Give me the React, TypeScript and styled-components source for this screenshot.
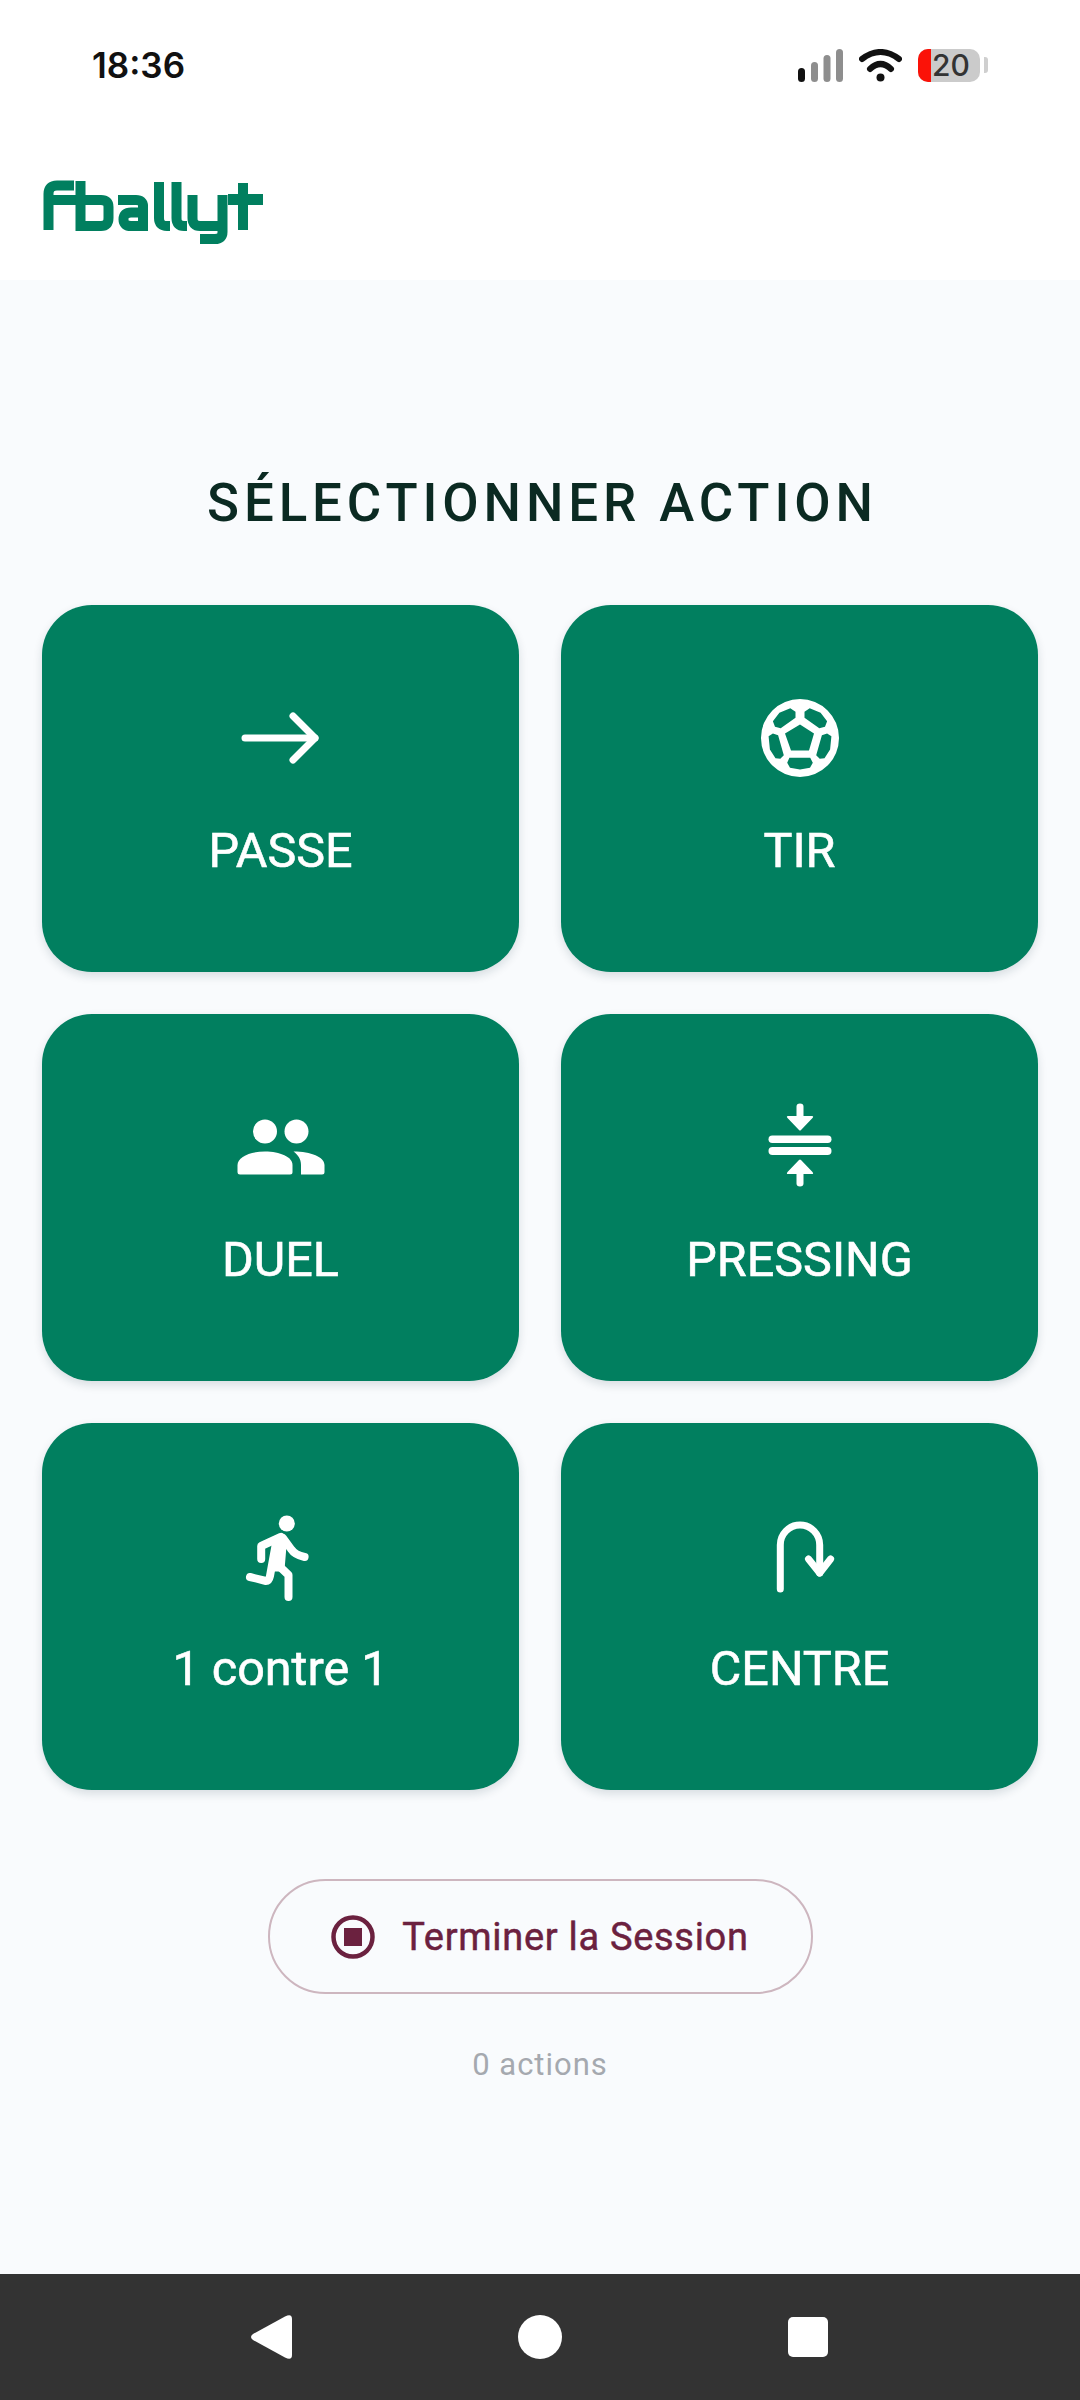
import React from "react";
import styled, { createGlobalStyle } from "styled-components";

const GlobalStyle = createGlobalStyle`
  html, body {
    margin: 0;
    padding: 0;
    background: #f9fbfd;
  }
  * {
    box-sizing: border-box;
  }
`;

const Page = styled.div`
  width: 1080px;
  height: 2400px;
  display: flex;
  flex-direction: column;
  font-family: Roboto, "Liberation Sans", sans-serif;
  background: #f9fbfd;
  overflow: hidden;
`;

const StatusBar = styled.div`
  height: 100px;
  background: #fff;
  display: flex;
  align-items: center;
  justify-content: space-between;
  padding: 30px 92px 0;
`;

const Clock = styled.span`
  font-family: Inter, Roboto, sans-serif;
  font-size: 35px;
  font-weight: 600;
  color: #111;
`;

const StatusIcons = styled.div`
  display: flex;
  align-items: center;
  gap: 16px;
`;

const Battery = styled.div`
  position: relative;
  width: 62px;
  height: 33px;
  background: #cbcbcb;
  border-radius: 10px;
  display: flex;
  align-items: center;
  justify-content: center;
  font-family: Inter, Roboto, sans-serif;
  font-size: 30px;
  line-height: 33px;
  font-weight: 500;
  color: #333;
`;

const BatteryFill = styled.div`
  position: absolute;
  left: 0;
  top: 0;
  bottom: 0;
  width: 13px;
  background: #fb1208;
  border-radius: 10px 0 0 10px;
`;

const BatteryLabel = styled.span`
  position: relative;
  margin-left: 4px;
`;

const BatteryTip = styled.div`
  width: 4px;
  height: 16px;
  margin-left: -12px;
  background: #cfcfcf;
  border-radius: 0 3px 3px 0;
`;

const Header = styled.header`
  height: 180px;
  background: #fff;
  display: flex;
  align-items: flex-start;
  padding: 80px 0 0 43px;
`;

const Main = styled.main`
  flex: 1;
  display: flex;
  flex-direction: column;
  align-items: center;
  padding: 193px 42px 0;
`;

const Title = styled.h1`
  margin: 0 0 72px 5px;
  font-size: 52.8px;
  line-height: 60px;
  font-weight: 500;
  letter-spacing: 4.9px;
  color: #0b2a22;
`;

const ActionGrid = styled.div`
  width: 100%;
  display: grid;
  grid-template-columns: 1fr 1fr;
  grid-auto-rows: 367px;
  gap: 42px;
`;

const ActionCard = styled.button`
  border: none;
  border-radius: 50px;
  background: #017f5f;
  color: #fff;
  box-shadow: 0 4px 10px rgba(15, 40, 60, 0.14);
  display: flex;
  flex-direction: column;
  align-items: center;
  padding: 85px 0 0;
  font-family: inherit;
`;

const ActionIcon = styled.svg`
  width: 96px;
  height: 96px;
  display: block;
`;

const ActionLabel = styled.span`
  margin-top: 38px;
  font-size: 48.5px;
  line-height: 54px;
  font-weight: 400;
  -webkit-text-stroke: 0.6px #fff;
  color: #fff;
`;

const EndButton = styled.button`
  margin-top: 89px;
  width: 545px;
  height: 115px;
  border: 2.5px solid #cdb6bf;
  border-radius: 58px;
  background: transparent;
  display: flex;
  align-items: center;
  justify-content: center;
  gap: 27px;
  font-family: inherit;
  font-size: 38px;
  font-weight: 400;
  letter-spacing: 0.7px;
  -webkit-text-stroke: 0.5px #6b213f;
  color: #6b213f;
`;

const ActionCount = styled.div`
  margin-top: 53px;
  font-size: 31px;
  line-height: 36px;
  letter-spacing: 1px;
  color: #a5a9af;
`;

const NavBar = styled.nav`
  height: 126px;
  background: #333;
  display: flex;
  align-items: center;
  justify-content: center;
  gap: 224px;
`;

const NavIcon = styled.svg`
  width: 44px;
  height: 60px;
  display: block;
`;

function Logo() {
  return (
    <svg width="224" height="66" viewBox="0 0 224 66" fill="none" stroke="#017f5f" strokeWidth="10">
      <path d="M5.5 50V14Q5.5 5.5 14 5.5H31M5.5 20H37" />
      <path d="M37.5 1V46H58Q65.5 46 65.5 38V27Q65.5 20 58 20H37.5" />
      <path d="M75 20H93Q100 20 100 26V46H88Q80.5 46 80.5 39.5Q80.5 32.5 88 32.5H100" />
      <path d="M116 2V38Q116 46 124 46H127M133.5 2V38Q133.5 46 141 46H144" />
      <path d="M149.5 15V38Q149.5 46 157 46H179.5M179.5 15V52Q179.5 59 172 59H157" />
      <path d="M200 3V50" />
      <path d="M185 19.5H220" strokeWidth="11" />
    </svg>
  );
}

function SignalIcon() {
  return (
    <svg width="45" height="33" viewBox="0 0 45 33">
      <rect x="0" y="19" width="7" height="14" rx="3.5" fill="#111" />
      <rect x="13" y="13" width="7" height="20" rx="3.5" fill="#8e8e8e" />
      <rect x="25.5" y="6" width="7" height="27" rx="3.5" fill="#8e8e8e" />
      <rect x="38" y="0" width="7" height="33" rx="3.5" fill="#8e8e8e" />
    </svg>
  );
}

function WifiIcon() {
  return (
    <svg width="43" height="33" viewBox="0 0 43 33" fill="none" stroke="#111" strokeWidth="6" strokeLinecap="round">
      <path d="M3 10Q21.5 -4 40 10" />
      <path d="M11 20Q21.5 10 32 20" />
      <circle cx="21.5" cy="28.5" r="4" fill="#111" stroke="none" />
    </svg>
  );
}

const ballPath =
  "M48 9A39 39 0 1 0 48 87A39 39 0 1 0 48 9Z" +
  "M48 34.5L62 43.5L57 60.5H39L33 43.5Z" +
  "M38.3 18.2L43.5 21.8V27.8L28.7 38.2L23 36.8L20.9 31.2L27.4 22.8Z" +
  "M57.7 18.2L52.5 21.8V27.8L67.3 38.2L73 36.8L75.1 31.2L68.6 22.8Z" +
  "M20.9 43.5L26.1 45.2L31.8 65.2L28.3 68.8L23.5 68.2L17.9 59.5L16.6 46.2Z" +
  "M75.1 43.5L69.9 45.2L64.2 65.2L67.7 68.8L72.5 68.2L78.1 59.5L79.4 46.2Z" +
  "M37.4 67.8H58.2L60.8 72.8L58 77.8L48 79.5L38 77.8L35.2 72.8Z";

const icons: Record<string, React.ReactNode> = {
  arrow: (
    <g fill="none" stroke="#fff" strokeWidth="7" strokeLinecap="round" strokeLinejoin="round">
      <path d="M12 48H82" />
      <path d="M60 26L82 48L60 70" />
    </g>
  ),
  ball: <path d={ballPath} fill="#fff" fillRule="evenodd" />,
  people: (
    <g fill="#fff">
      <ellipse cx="32" cy="32.5" rx="12" ry="12" />
      <ellipse cx="63.5" cy="32.5" rx="12" ry="12" />
      <path d="M4.5 73V66C4.5 58 17 52.5 32 52.5S59.5 58 59.5 66V73Q59.5 75.5 57 75.5H7Q4.5 75.5 4.5 73Z" />
      <path d="M60.5 52.5C78 52.5 91.5 58 91.5 66V73Q91.5 75.5 89 75.5H68V66C68 60 65 56 60.5 52.5Z" />
    </g>
  ),
  pressing: (
    <g fill="#fff">
      <rect x="16.5" y="36.5" width="63" height="7.5" rx="3.75" />
      <rect x="16.5" y="48" width="63" height="8" rx="4" />
      <path d="M44.5 7.5Q44.5 4.5 48 4.5T51.5 7.5V17H60Q62 17 60.5 19L49 31Q48 32 47 31L35.5 19Q34 17 36 17H44.5Z" />
      <path d="M44.5 84.5Q44.5 87.5 48 87.5T51.5 84.5V75H60Q62 75 60.5 73L49 61Q48 60 47 61L35.5 73Q34 75 36 75H44.5Z" />
    </g>
  ),
  runner: (
    <g fill="none" stroke="#fff" strokeWidth="8" strokeLinecap="round" strokeLinejoin="round">
      <ellipse cx="53.8" cy="15.5" rx="8" ry="8" fill="#fff" stroke="none" />
      <path d="M47.7 29L28.2 38V51" />
      <path d="M50 30L58 41Q62 47 71.6 49" />
      <path d="M17 69L33 73Q36 73 37 68L43 35L48 33" />
      <path d="M49 33L44 56L55.5 67V89" />
      <path d="M47 30L41 62L50 62L52 38Z" fill="#fff" strokeWidth="3" />
    </g>
  ),
  uturn: (
    <g fill="none" stroke="#fff" strokeWidth="7" strokeLinecap="round" strokeLinejoin="round">
      <path d="M28.3 81V37A19.7 20 0 0 1 67.7 37V65" />
      <path d="M56.5 51L67.7 65L78.6 51" />
    </g>
  ),
};

const actions = [
  { label: "PASSE", icon: "arrow" },
  { label: "TIR", icon: "ball" },
  { label: "DUEL", icon: "people" },
  { label: "PRESSING", icon: "pressing" },
  { label: "1 contre 1", icon: "runner" },
  { label: "CENTRE", icon: "uturn" },
];

export default function App() {
  return (
    <Page>
      <GlobalStyle />
      <StatusBar>
        <Clock>18:36</Clock>
        <StatusIcons>
          <SignalIcon />
          <WifiIcon />
          <Battery>
            <BatteryFill />
            <BatteryLabel>20</BatteryLabel>
          </Battery>
          <BatteryTip />
        </StatusIcons>
      </StatusBar>
      <Header>
        <Logo />
      </Header>
      <Main>
        <Title>SÉLECTIONNER ACTION</Title>
        <ActionGrid>
          {actions.map((action) => (
            <ActionCard key={action.label}>
              <ActionIcon viewBox="0 0 96 96">{icons[action.icon]}</ActionIcon>
              <ActionLabel>{action.label}</ActionLabel>
            </ActionCard>
          ))}
        </ActionGrid>
        <EndButton>
          <svg width="44" height="44" viewBox="0 0 44 44">
            <circle cx="22" cy="22" r="19.5" fill="none" stroke="#6b213f" strokeWidth="4.5" />
            <rect x="13" y="13" width="18" height="18" fill="#6b213f" />
          </svg>
          Terminer la Session
        </EndButton>
        <ActionCount>0 actions</ActionCount>
      </Main>
      <NavBar>
        <NavIcon viewBox="0 0 44 60">
          <path d="M35 9.5L3 27Q-1 30 3 33L35 50.5Q42 54 42 48V12Q42 6 35 9.5Z" fill="#fff" />
        </NavIcon>
        <NavIcon viewBox="0 0 44 60">
          <circle cx="22" cy="30" r="22" fill="#fff" />
        </NavIcon>
        <NavIcon viewBox="0 0 44 60">
          <rect x="2" y="10" width="40" height="40" rx="5" fill="#fff" />
        </NavIcon>
      </NavBar>
    </Page>
  );
}
